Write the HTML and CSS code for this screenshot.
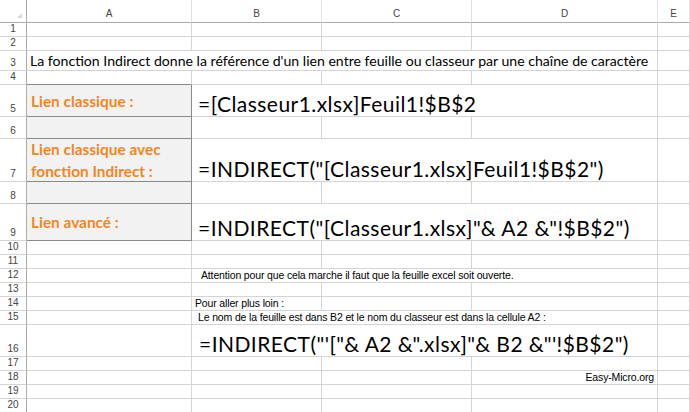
FILE: index.html
```html
<!DOCTYPE html>
<html lang="fr">
<head>
  <meta charset="UTF-8" />
  <meta name="viewport" content="width=device-width, initial-scale=1.0" />
  <title>Fonction Indirect</title>
  <link rel="stylesheet" href="styles.css">
</head>
<body>
  <div class="sheet">
    <!-- en-tetes de colonnes -->
    <div class="corner"><span class="tri"></span></div>
    <div class="ch">A</div>
    <div class="ch">B</div>
    <div class="ch">C</div>
    <div class="ch">D</div>
    <div class="ch">E</div>

    <!-- 1 -->
    <div class="rh">1</div>
    <div class="c"></div><div class="c"></div><div class="c"></div><div class="c"></div><div class="c"></div>
    <!-- 2 -->
    <div class="rh">2</div>
    <div class="c"></div><div class="c"></div><div class="c"></div><div class="c"></div><div class="c"></div>
    <!-- 3 -->
    <div class="rh">3</div>
    <div class="c text span4">La fonction Indirect donne la référence d'un lien entre feuille ou classeur par une chaîne de caractère</div>
    <div class="c"></div>
    <!-- 4 -->
    <div class="rh">4</div>
    <div class="c box-top"></div><div class="c"></div><div class="c"></div><div class="c"></div><div class="c"></div>
    <!-- 5 -->
    <div class="rh">5</div>
    <div class="c box label">Lien classique :</div>
    <div class="c formula span3">=[Classeur1.xlsx]Feuil1!$B$2</div>
    <div class="c"></div>
    <!-- 6 -->
    <div class="rh">6</div>
    <div class="c box"></div><div class="c"></div><div class="c"></div><div class="c"></div><div class="c"></div>
    <!-- 7 -->
    <div class="rh">7</div>
    <div class="c box label">Lien classique avec<br>fonction Indirect :</div>
    <div class="c formula span3">=INDIRECT("[Classeur1.xlsx]Feuil1!$B$2")</div>
    <div class="c"></div>
    <!-- 8 -->
    <div class="rh">8</div>
    <div class="c box"></div><div class="c"></div><div class="c"></div><div class="c"></div><div class="c"></div>
    <!-- 9 -->
    <div class="rh">9</div>
    <div class="c box label">Lien avancé :</div>
    <div class="c formula span3">=INDIRECT("[Classeur1.xlsx]"&amp; A2 &amp;"!$B$2")</div>
    <div class="c"></div>
    <!-- 10 -->
    <div class="rh">10</div>
    <div class="c"></div><div class="c"></div><div class="c"></div><div class="c"></div><div class="c"></div>
    <!-- 11 -->
    <div class="rh">11</div>
    <div class="c"></div><div class="c"></div><div class="c"></div><div class="c"></div><div class="c"></div>
    <!-- 12 -->
    <div class="rh">12</div>
    <div class="c"></div>
    <div class="c small span3 indent2">Attention pour que cela marche il faut que la feuille excel soit ouverte.</div>
    <div class="c"></div>
    <!-- 13 -->
    <div class="rh">13</div>
    <div class="c"></div><div class="c"></div><div class="c"></div><div class="c"></div><div class="c"></div>
    <!-- 14 -->
    <div class="rh">14</div>
    <div class="c"></div>
    <div class="c small">Pour aller plus loin :</div>
    <div class="c"></div><div class="c"></div><div class="c"></div>
    <!-- 15 -->
    <div class="rh">15</div>
    <div class="c"></div>
    <div class="c small span3 indent1">Le nom de la feuille est dans B2 et le nom du classeur est dans la cellule A2 :</div>
    <div class="c"></div>
    <!-- 16 -->
    <div class="rh">16</div>
    <div class="c"></div>
    <div class="c formula span3 indent2">=INDIRECT("'["&amp; A2 &amp;".xlsx]"&amp; B2 &amp;"'!$B$2")</div>
    <div class="c"></div>
    <!-- 17 -->
    <div class="rh">17</div>
    <div class="c"></div><div class="c"></div><div class="c"></div><div class="c"></div><div class="c"></div>
    <!-- 18 -->
    <div class="rh">18</div>
    <div class="c"></div><div class="c"></div><div class="c"></div>
    <div class="c small right">Easy-Micro.org</div>
    <div class="c"></div>
    <!-- 19 -->
    <div class="rh">19</div>
    <div class="c"></div><div class="c"></div><div class="c"></div><div class="c"></div><div class="c"></div>
    <!-- 20 -->
    <div class="rh">20</div>
    <div class="c"></div><div class="c"></div><div class="c"></div><div class="c"></div><div class="c"></div>
  </div>
</body>
</html>
```

FILE: styles.css
```css
* {
  box-sizing: border-box;
}
body {
  margin: 0;
  background: #fff;
  overflow: hidden;
  font-family: 'Liberation Sans', Arial, sans-serif;
}
.sheet {
  display: grid;
  grid-template-columns: 27px 165px 130px 150px 186px 32px;
  grid-template-rows: 23px 14px 14px 20px 14px 32px 22px 43px 22px 37px 14px 14px 14px 14px 14px 14px 32px 14px 14px 14px 14px;
}
.corner {
  border-right: 1px solid #ababab;
  border-bottom: 1px solid #ababab;
  display: flex;
  justify-content: flex-end;
  align-items: flex-end;
  padding: 0 4px 4px 0;
}
.tri {
  width: 0;
  height: 0;
  border-left: 5px solid transparent;
  border-bottom: 5px solid #d6d6d6;
}
.ch {
  border-right: 1px solid #e1e1e1;
  border-bottom: 1px solid #ababab;
  color: #444;
  font-size: 10px;
  display: flex;
  justify-content: center;
  align-items: flex-end;
  padding-bottom: 3px;
  line-height: 10px;
}
.rh {
  border-right: 1px solid #ababab;
  border-bottom: 1px solid #d4d4d4;
  color: #444;
  font-size: 10px;
  line-height: 10px;
  display: flex;
  justify-content: center;
  align-items: flex-end;
  padding-bottom: 2px;
}
.c {
  border-right: 1px solid #d4d4d4;
  border-bottom: 1px solid #d4d4d4;
  white-space: nowrap;
  display: flex;
  align-items: flex-end;
  padding-left: 3px;
  color: #000;
}
.span4 {
  grid-column: span 4;
}
.span3 {
  grid-column: span 3;
}
.box-top {
  border-bottom-color: #8a8a8a;
}
.box {
  background: #f2f2f2;
  border-right-color: #8a8a8a;
  border-bottom-color: #8a8a8a;
}
.text {
  font-family: 'Lato', sans-serif;
  font-size: 14.1px;
  line-height: 16px;
  padding-bottom: 1px;
}
.label {
  font-family: 'Lato', sans-serif;
  font-weight: bold;
  font-size: 15.4px;
  line-height: 22px;
  color: #f7851e;
  align-items: center;
  padding-left: 4px;
}
.formula {
  font-family: 'Lato', sans-serif;
  font-size: 21px;
  letter-spacing: 0.45px;
  line-height: 22px;
  padding-left: 6px;
  padding-bottom: 1px;
}
.small {
  font-size: 10.5px;
  letter-spacing: -0.15px;
  line-height: 11px;
  padding-bottom: 1px;
}
.indent1 {
  padding-left: 6px;
}
.indent2 {
  padding-left: 9px;
}
.formula.indent2 {
  padding-left: 7px;
}
.right {
  justify-content: flex-end;
  padding-right: 3px;
}
```
